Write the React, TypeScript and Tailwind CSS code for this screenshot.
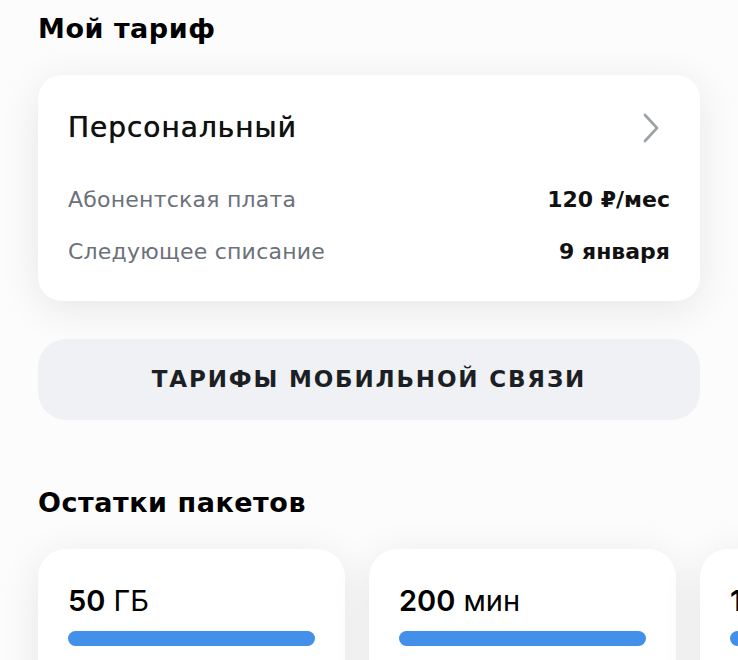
import { type ReactNode } from "react";

const packs = [
  { amount: "50", unit: "ГБ" },
  { amount: "200", unit: "мин" },
  { amount: "100", unit: "SMS" },
];

function Row({ label, value }: { label: string; value: string }) {
  return (
    <div className="flex items-center justify-between h-[28px]">
      <span className="text-[22px] tracking-[0.01em] text-[#6b717b] font-['DejaVu_Sans',sans-serif]">{label}</span>
      <span className="text-[22px] font-bold text-[#111] font-['DejaVu_Sans',sans-serif]">{value}</span>
    </div>
  );
}

function Section({ title, children }: { title: string; children: ReactNode }) {
  return (
    <div>
      <h2 className="text-[27px] leading-[36px] font-bold tracking-[0.02em] text-black font-['DejaVu_Sans',sans-serif] mb-[28px]">{title}</h2>
      {children}
    </div>
  );
}

export default function App() {
  return (
    <div className="w-[738px] h-[660px] bg-[#fcfcfc] overflow-hidden pl-[38px] pt-[11px]">
      <div className="w-[662px]">
        <Section title="Мой тариф">
          <div className="bg-white rounded-[24px] shadow-[0_8px_40px_rgba(0,0,0,0.09)] px-[30px] pt-[36px] pb-[36px]">
            <div className="flex items-center justify-between h-[34px]">
              <span className="text-[28px] leading-[34px] tracking-[0.035em] text-[#111] font-['DejaVu_Sans',sans-serif] [text-shadow:0_0_0.7px_#111]">Персональный</span>
              <svg width="18" height="32" viewBox="0 0 18 32" className="mr-[10px]">
                <polyline points="3,3 15,16 3,29" fill="none" stroke="#9ca0a7" strokeWidth="2.6" strokeLinecap="round" strokeLinejoin="round" />
              </svg>
            </div>
            <div className="mt-[40px] flex flex-col gap-[24px]">
              <Row label="Абонентская плата" value="120 ₽/мес" />
              <Row label="Следующее списание" value="9 января" />
            </div>
          </div>
        </Section>

        <button className="mt-[38px] w-full h-[81px] rounded-[28px] bg-[#eff1f5] text-[#1c1f23] text-[23px] font-bold tracking-[0.08em] font-['DejaVu_Sans',sans-serif] flex items-center justify-center">
          ТАРИФЫ МОБИЛЬНОЙ СВЯЗИ
        </button>

        <div className="mt-[65px]">
          <Section title="Остатки пакетов">
            <div className="flex gap-[24px]">
              {packs.map((p) => (
                <div key={p.unit} className="shrink-0 w-[307px] h-[160px] bg-white rounded-[28px] shadow-[0_8px_40px_rgba(0,0,0,0.09)] px-[30px] pt-[35px]">
                  <div className="text-[29px] leading-[34px] text-black font-['Inter',sans-serif]">
                    <span className="font-semibold">{p.amount}</span> <span>{p.unit}</span>
                  </div>
                  <div className="mt-[13px] h-[15px] rounded-full bg-[#4290ea]" />
                </div>
              ))}
            </div>
          </Section>
        </div>
      </div>
    </div>
  );
}
